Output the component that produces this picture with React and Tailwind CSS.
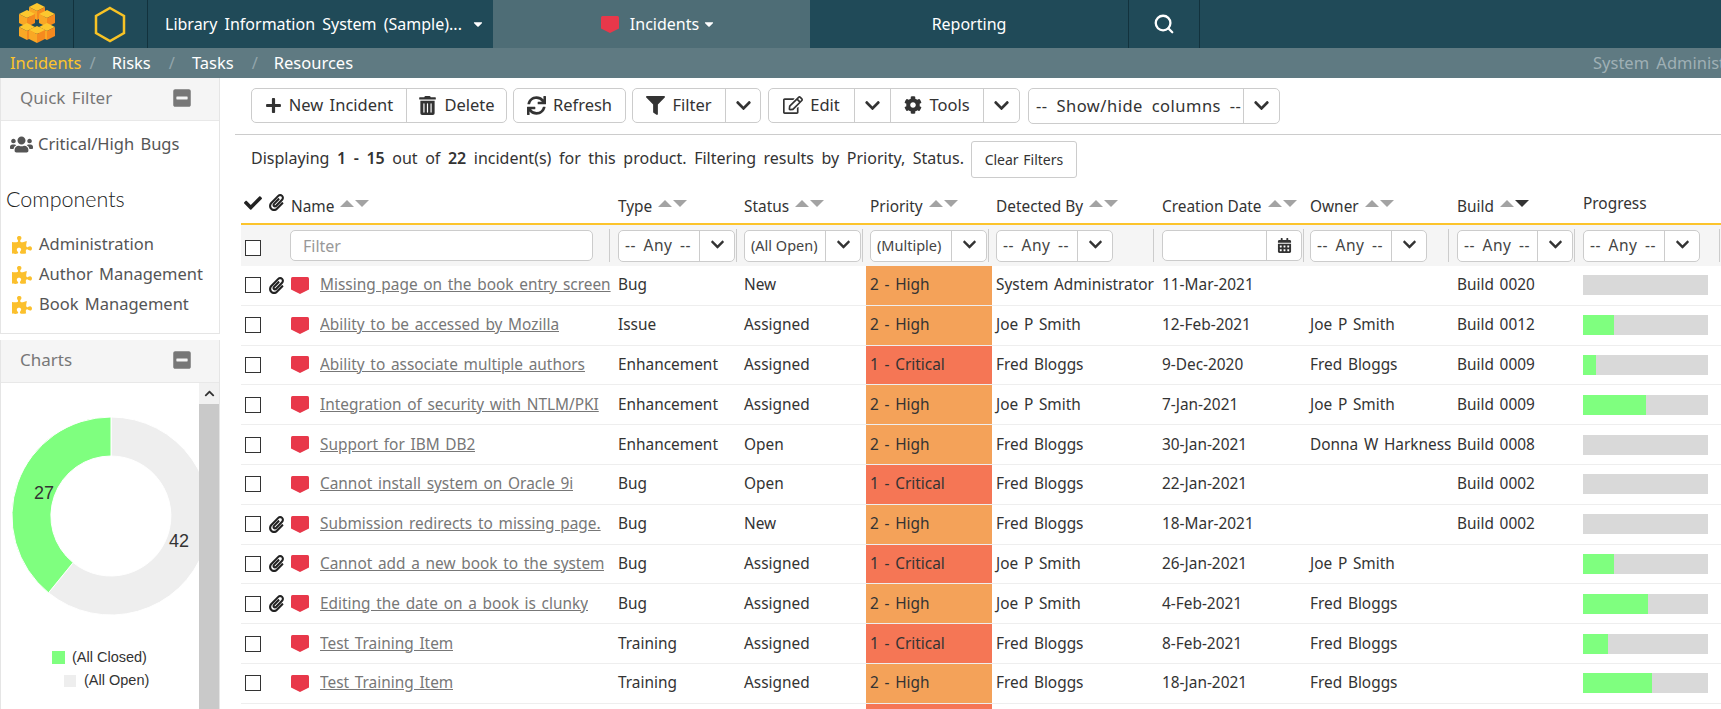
import React from 'react';
import {
  FaPlus, FaTrashAlt, FaSync, FaFilter, FaRegEdit, FaCog, FaChevronDown, FaChevronUp, FaUsers,
  FaPuzzlePiece, FaCheck, FaPaperclip, FaCalendarAlt, FaMinusSquare, FaCaretDown,
} from 'react-icons/fa';
import { Search } from 'lucide-react';

const COLS = 'grid grid-cols-[24px_22px_327px_126px_126px_126px_166px_148px_147px_126px_142px]';

const ROWS = [
  { name: 'Missing page on the book entry screen', type: 'Bug', status: 'New', pri: 'High', by: 'System Administrator', date: '11-Mar-2021', owner: '', build: 'Build 0020', pct: 0, clip: true },
  { name: 'Ability to be accessed by Mozilla', type: 'Issue', status: 'Assigned', pri: 'High', by: 'Joe P Smith', date: '12-Feb-2021', owner: 'Joe P Smith', build: 'Build 0012', pct: 25 },
  { name: 'Ability to associate multiple authors', type: 'Enhancement', status: 'Assigned', pri: 'Critical', by: 'Fred Bloggs', date: '9-Dec-2020', owner: 'Fred Bloggs', build: 'Build 0009', pct: 10 },
  { name: 'Integration of security with NTLM/PKI', type: 'Enhancement', status: 'Assigned', pri: 'High', by: 'Joe P Smith', date: '7-Jan-2021', owner: 'Joe P Smith', build: 'Build 0009', pct: 50 },
  { name: 'Support for IBM DB2', type: 'Enhancement', status: 'Open', pri: 'High', by: 'Fred Bloggs', date: '30-Jan-2021', owner: 'Donna W Harkness', build: 'Build 0008', pct: 0 },
  { name: 'Cannot install system on Oracle 9i', type: 'Bug', status: 'Open', pri: 'Critical', by: 'Fred Bloggs', date: '22-Jan-2021', owner: '', build: 'Build 0002', pct: 0 },
  { name: 'Submission redirects to missing page.', type: 'Bug', status: 'New', pri: 'High', by: 'Fred Bloggs', date: '18-Mar-2021', owner: '', build: 'Build 0002', pct: 0, clip: true },
  { name: 'Cannot add a new book to the system', type: 'Bug', status: 'Assigned', pri: 'Critical', by: 'Joe P Smith', date: '26-Jan-2021', owner: 'Joe P Smith', build: '', pct: 25, clip: true },
  { name: 'Editing the date on a book is clunky', type: 'Bug', status: 'Assigned', pri: 'High', by: 'Joe P Smith', date: '4-Feb-2021', owner: 'Fred Bloggs', build: '', pct: 52, clip: true },
  { name: 'Test Training Item', type: 'Training', status: 'Assigned', pri: 'Critical', by: 'Fred Bloggs', date: '8-Feb-2021', owner: 'Fred Bloggs', build: '', pct: 20 },
  { name: 'Test Training Item', type: 'Training', status: 'Assigned', pri: 'High', by: 'Fred Bloggs', date: '18-Jan-2021', owner: 'Fred Bloggs', build: '', pct: 55 },
  { name: '', type: '', status: '', pri: 'Critical', by: '', date: '', owner: '', build: '', pct: 0, blank: true },
];

const Logo = () => {
  const cube = (x, y) => (
    <g key={`${x}-${y}`} transform={`translate(${x} ${y})`}>
      <polygon points="0,-8 8,-4 0,0 -8,-4" fill="#fcc72f" />
      <polygon points="-8,-4 0,0 0,9 -8,5" fill="#f9a825" />
      <polygon points="8,-4 0,0 0,9 8,5" fill="#f58a1f" />
    </g>
  );
  return (
    <svg width="38" height="44" viewBox="0 0 38 44">
      {cube(19, 9)}
      {cube(9, 16)}
      {cube(29, 16)}
      {cube(9, 29)}
      {cube(29, 29)}
      {cube(19, 32)}
    </svg>
  );
};

const Shield = () => (
  <svg width="18" height="17" viewBox="0 0 18 17" className="shrink-0">
    <path d="M1.5 0H16.5Q18 0 18 1.5V12.5L9 17L0 12.5V1.5Q0 0 1.5 0Z" fill="#e8384a" />
  </svg>
);

const Sort = ({ down }) => (
  <span className="ml-[6px] mb-[6px] inline-flex items-center gap-[1px]">
    <span className="h-0 w-0 border-x-[7.5px] border-b-[7px] border-x-transparent border-b-[#a3a3a3]" />
    <span className={`h-0 w-0 border-x-[7.5px] border-t-[7px] border-x-transparent ${down ? 'border-t-[#333]' : 'border-t-[#a3a3a3]'}`} />
  </span>
);

const Btn = ({ icon, label, w, last }) => (
  <div className={`flex h-full items-center justify-center gap-[7px] pb-[1px] ${w} ${last ? '' : 'border-r border-[#ccc]'}`}>
    {icon}
    {label && <span>{label}</span>}
  </div>
);

const Group = ({ children, ml }) => (
  <div className={`flex h-[35px] items-center rounded-[5px] border border-[#ccc] bg-white text-[16.5px] text-[#333] [word-spacing:2px] ${ml}`}>
    {children}
  </div>
);

const Chevron = () => <FaChevronDown className="text-[17px] text-[#333]" />;

const Select = ({ label, w, small }) => (
  <div className={`flex h-[32px] ${w} items-center rounded-[5px] border border-[#ccc] bg-white`}>
    <span className={`flex-1 overflow-hidden whitespace-nowrap pl-[6px] ${small ? 'text-[14.5px]' : 'text-[15.5px] tracking-[0.5px] [word-spacing:3px]'} text-[#444]`}>{label}</span>
    <span className="flex h-full w-[35px] items-center justify-center border-l border-[#ccc] pb-[3px]">
      <FaChevronDown className="text-[15px] text-[#333]" />
    </span>
  </div>
);

const Head = ({ label, down, sort = true }) => (
  <div className={`flex items-center pl-[4px] text-[15.4px] text-[#333] ${sort ? '' : 'pb-[5px]'}`}>
    <span>{label}</span>
    {sort && <Sort down={down} />}
  </div>
);

const FilterCell = ({ children }) => (
  <div className="flex items-center pl-[4px]">
    {children}
  </div>
);

const Divider = ({ ml = 'ml-[1px]' }) => <span className={`${ml} h-[33px] w-px shrink-0 bg-[#ccc]`} />;

const Row = ({ r }) => (
  <div className={`${COLS} h-[39.8px] items-center border-b border-[#eee] text-[15.4px] text-[#333] [word-spacing:1.7px]`}>
    <div className="pl-[4px]">
      {!r.blank && <div className="h-[16px] w-[16px] border border-[#333] bg-white" />}
    </div>
    <div className="flex justify-center">
      {r.clip && <FaPaperclip className="text-[17px] text-[#222]" />}
    </div>
    <div className="flex items-center pl-[4px]">
      {!r.blank && <Shield />}
      <a className="ml-[11px] truncate pb-[1px] text-[#777] underline">{r.name}</a>
    </div>
    <div className="pb-[1px] pl-[4px]">{r.type}</div>
    <div className="pb-[1px] pl-[4px]">{r.status}</div>
    <div className={`flex h-full items-center pb-[1px] pl-[4px] ${r.pri === 'Critical' ? 'bg-[#f57655]' : 'bg-[#f4a259]'}`}>
      {r.blank ? '' : r.pri === 'Critical' ? '1 - Critical' : '2 - High'}
    </div>
    <div className="truncate pb-[1px] pl-[4px]">{r.by}</div>
    <div className="pb-[1px] pl-[4px]">{r.date}</div>
    <div className="truncate pb-[1px] pl-[4px]">{r.owner}</div>
    <div className="pb-[1px] pl-[4px]">{r.build}</div>
    <div className="pl-[4px]">
      {!r.blank && (
        <div className="h-[20px] w-[125px] bg-[#d9d9d9]">
          <div className="h-full bg-[#7fff7f]" style={{ width: `${r.pct}%` }} />
        </div>
      )}
    </div>
  </div>
);

const Sidebar = () => (
  <aside className="flex w-[220px] shrink-0 flex-col text-[16.5px] text-[#555] [word-spacing:2px]">
    <section className="h-[256px] border-x border-b border-[#e5e5e5]">
      <div className="flex h-[43px] items-center justify-between border-b border-[#e8e8e8] bg-[#f5f5f5] pb-[2px] pl-[19px] pr-[27px] text-[#777]">
        <span className="text-[17px]">Quick Filter</span>
        <FaMinusSquare className="text-[20px] text-[#777]" />
      </div>
      <div className="mt-[11px] flex items-center pl-[9px]">
        <FaUsers className="text-[23px] text-[#555]" />
        <span className="ml-[5px]">Critical/High Bugs</span>
      </div>
      <div className="mt-[26px] pl-[5px] font-['Lato'] text-[21.5px] font-light text-[#222]">Components</div>
      <ul className="mt-[19px] flex flex-col gap-[9px] pl-[11px]">
        {['Administration', 'Author Management', 'Book Management'].map((c) => (
          <li key={c} className="flex h-[21px] items-center">
            <FaPuzzlePiece className="text-[20px] text-[#fbc02d]" />
            <span className="ml-[7px]">{c}</span>
          </li>
        ))}
      </ul>
    </section>
    <section className="mt-[6px] flex-1 border-x border-[#e5e5e5]">
      <div className="flex h-[43px] items-center justify-between border-b border-[#e8e8e8] bg-[#f5f5f5] pb-[2px] pl-[19px] pr-[27px] text-[#777]">
        <span className="text-[17px]">Charts</span>
        <FaMinusSquare className="text-[20px] text-[#777]" />
      </div>
      <div className="flex h-[326px]">
        <div className="relative w-[199px] overflow-hidden">
          <svg width="199" height="233" viewBox="1 0 199 233" className="mt-[34px]">
            <path d="M111 0A99 99 0 1 1 48.5 175.8L73.1 145.6A60 60 0 1 0 111 39Z" fill="#eeeeee" stroke="#fff" strokeWidth="1" />
            <path d="M111 0V39A60 60 0 0 0 73.1 145.6L48.5 175.8A99 99 0 0 1 111 0Z" fill="#7fff7f" stroke="#fff" strokeWidth="1" />
          </svg>
          <span className="absolute left-[33px] top-[97px] font-['Liberation_Sans'] text-[18px] text-[#333]">27</span>
          <span className="absolute left-[168px] top-[145px] font-['Liberation_Sans'] text-[18px] text-[#333]">42</span>
          <div className="absolute left-[51px] top-[264px] flex items-center font-['Liberation_Sans'] text-[14.5px] text-[#333] [word-spacing:0px]">
            <span className="mr-[7px] h-[13px] w-[13px] bg-[#7fff7f]" />(All Closed)
          </div>
          <div className="absolute left-[63px] top-[287px] flex items-center font-['Liberation_Sans'] text-[14.5px] text-[#333] [word-spacing:0px]">
            <span className="mr-[8px] h-[12px] w-[12px] bg-[#eeeeee]" />(All Open)
          </div>
        </div>
        <div className="flex w-[20px] flex-col bg-[#f1f1f1]">
          <div className="flex h-[21px] items-center justify-center">
            <FaChevronUp className="text-[11px] text-[#333]" />
          </div>
          <div className="flex-1 bg-[#c9c9c9]" />
        </div>
      </div>
    </section>
  </aside>
);

export default function App() {
  return (
    <div className="h-[709px] w-[1721px] overflow-hidden bg-white font-['Noto_Sans',sans-serif] text-[15px]">
      <header className="flex h-[48px] bg-[#204a58] text-white">
        <div className="flex w-[74px] items-center justify-center border-r border-[#12323d]"><Logo /></div>
        <div className="flex w-[74px] items-center justify-center border-r border-[#12323d] pr-[2px]">
          <svg width="32" height="37" viewBox="0 0 32 37">
            <polygon points="16,2 30,10 30,27 16,35 2,27 2,10" fill="none" stroke="#f8c325" strokeWidth="2.5" />
          </svg>
        </div>
        <div className="flex w-[345px] items-center pl-[17px] text-[16px] [word-spacing:3px]">
          <span>Library Information System (Sample)...</span>
          <FaCaretDown className="ml-[9px] text-[14px]" />
        </div>
        <div className="flex w-[317px] items-center justify-center bg-[#4e6d76] pl-[14px] text-[16px]">
          <Shield />
          <span className="ml-[11px]">Incidents</span>
          <FaCaretDown className="ml-[3px] text-[14px]" />
        </div>
        <div className="flex w-[318px] items-center justify-center text-[16px]">Reporting</div>
        <div className="flex w-[72px] items-center justify-center border-x border-[#12323d]">
          <Search size={22} strokeWidth={2.5} />
        </div>
      </header>
      <nav className="flex h-[30px] items-center justify-between bg-[#5f7a82] pl-[10px] text-[16.5px] text-white">
        <div className="flex items-center">
          <span className="text-[#fcc42c]">Incidents</span>
          <span className="ml-[8px] text-[#92a5ab]">/</span>
          <span className="ml-[16px]">Risks</span>
          <span className="ml-[18px] text-[#92a5ab]">/</span>
          <span className="ml-[17px]">Tasks</span>
          <span className="ml-[18px] text-[#92a5ab]">/</span>
          <span className="ml-[16px]">Resources</span>
        </div>
        <span className="w-[128px] overflow-hidden whitespace-nowrap text-[16.5px] text-[#9fb0b5] [word-spacing:3px]">System Administrator</span>
      </nav>
      <div className="flex">
        <Sidebar />
        <main className="min-w-0 flex-1 pl-[15px]">
          <div className="flex h-[57px] items-start border-b border-[#ccc] pl-[16px] pt-[10px]">
            <Group>
              <Btn w="w-[155px]" icon={<FaPlus className="text-[17px]" />} label="New Incident" />
              <Btn w="w-[99px]" last icon={<FaTrashAlt className="text-[19px]" />} label="Delete" />
            </Group>
            <Group ml="ml-[6px]">
              <Btn w="w-[111px]" last icon={<FaSync className="text-[19px]" />} label="Refresh" />
            </Group>
            <Group ml="ml-[6px]">
              <Btn w="w-[93px]" icon={<FaFilter className="text-[19px]" />} label="Filter" />
              <Btn w="w-[34px]" last icon={<Chevron />} />
            </Group>
            <Group ml="ml-[7px]">
              <Btn w="w-[86px]" icon={<FaRegEdit className="text-[20px]" />} label="Edit" />
              <Btn w="w-[36px]" icon={<Chevron />} />
              <Btn w="w-[93px]" icon={<FaCog className="text-[18px]" />} label="Tools" />
              <Btn w="w-[35px]" last icon={<Chevron />} />
            </Group>
            <div className="ml-[8px] flex h-[36px] w-[252px] items-center rounded-[5px] border border-[#ccc] text-[16.5px] text-[#333]">
              <span className="flex-1 whitespace-nowrap pl-[7px] tracking-[0.5px] [word-spacing:4px]">-- Show/hide columns --</span>
              <span className="flex h-full w-[36px] items-center justify-center border-l border-[#ccc] pb-[2px]"><Chevron /></span>
            </div>
          </div>
          <div className="flex h-[43px] items-start pl-[16px] pt-[6px]">
            <p className="mt-[5px] whitespace-nowrap text-[16px] text-[#333] [word-spacing:3.4px]">
              Displaying <b className="font-semibold">1 - 15</b> out of <b className="font-semibold">22</b> incident(s) for this product. Filtering results by Priority, Status.
            </p>
            <div className="ml-[7px] flex h-[37px] w-[106px] shrink-0 items-center justify-center rounded-[3px] border border-[#ccc] text-[14px] text-[#333] [word-spacing:1px]">Clear Filters</div>
          </div>
          <div className="ml-[6px] w-[1480px]">
            <div className={`${COLS} h-[47px] items-center border-b-2 border-[#fcc42c] pt-[12px]`}>
              <div className="mb-[8px] flex justify-center"><FaCheck className="text-[18px] text-[#222]" /></div>
              <div className="mb-[8px] flex justify-center"><FaPaperclip className="text-[17px] text-[#222]" /></div>
              <Head label="Name" />
              <Head label="Type" />
              <Head label="Status" />
              <Head label="Priority" />
              <Head label="Detected By" />
              <Head label="Creation Date" />
              <Head label="Owner" />
              <Head label="Build" down />
              <Head label="Progress" sort={false} />
            </div>
            <div className={`${COLS} h-[41px] items-center bg-[#f5f5f5]`}>
              <div className="pl-[4px] pt-[4px]"><div className="h-[16px] w-[16px] border border-[#333] bg-white" /></div>
              <div />
              <div className="flex items-center pl-[3px]">
                <div className="flex h-[31px] w-[303px] shrink-0 items-center rounded-[5px] border border-[#ccc] bg-white pl-[12px] text-[16px] text-[#999]">Filter</div>
                <Divider ml="ml-[16px]" />
              </div>
              <FilterCell><Select label="-- Any --" w="w-[117px]" /><Divider /></FilterCell>
              <FilterCell><Select label="(All Open)" w="w-[117px]" small /><Divider /></FilterCell>
              <FilterCell><Select label="(Multiple)" w="w-[117px]" small /><Divider /></FilterCell>
              <FilterCell><Select label="-- Any --" w="w-[117px]" /><Divider ml="ml-[40px]" /></FilterCell>
              <FilterCell>
                <div className="flex h-[31px] w-[140px] items-center justify-end rounded-[5px] border border-[#ccc] bg-white">
                  <span className="flex h-full w-[35px] items-center justify-center border-l border-[#ccc]">
                    <FaCalendarAlt className="text-[15px] text-[#333]" />
                  </span>
                </div>
                <Divider />
              </FilterCell>
              <FilterCell><Select label="-- Any --" w="w-[117px]" /><Divider ml="ml-[21px]" /></FilterCell>
              <FilterCell><Select label="-- Any --" w="w-[116px]" /><Divider /></FilterCell>
              <FilterCell><Select label="-- Any --" w="w-[117px]" /><Divider ml="ml-[19px]" /></FilterCell>
            </div>
            {ROWS.map((r, i) => <Row key={i} r={r} />)}
          </div>
        </main>
      </div>
    </div>
  );
}
